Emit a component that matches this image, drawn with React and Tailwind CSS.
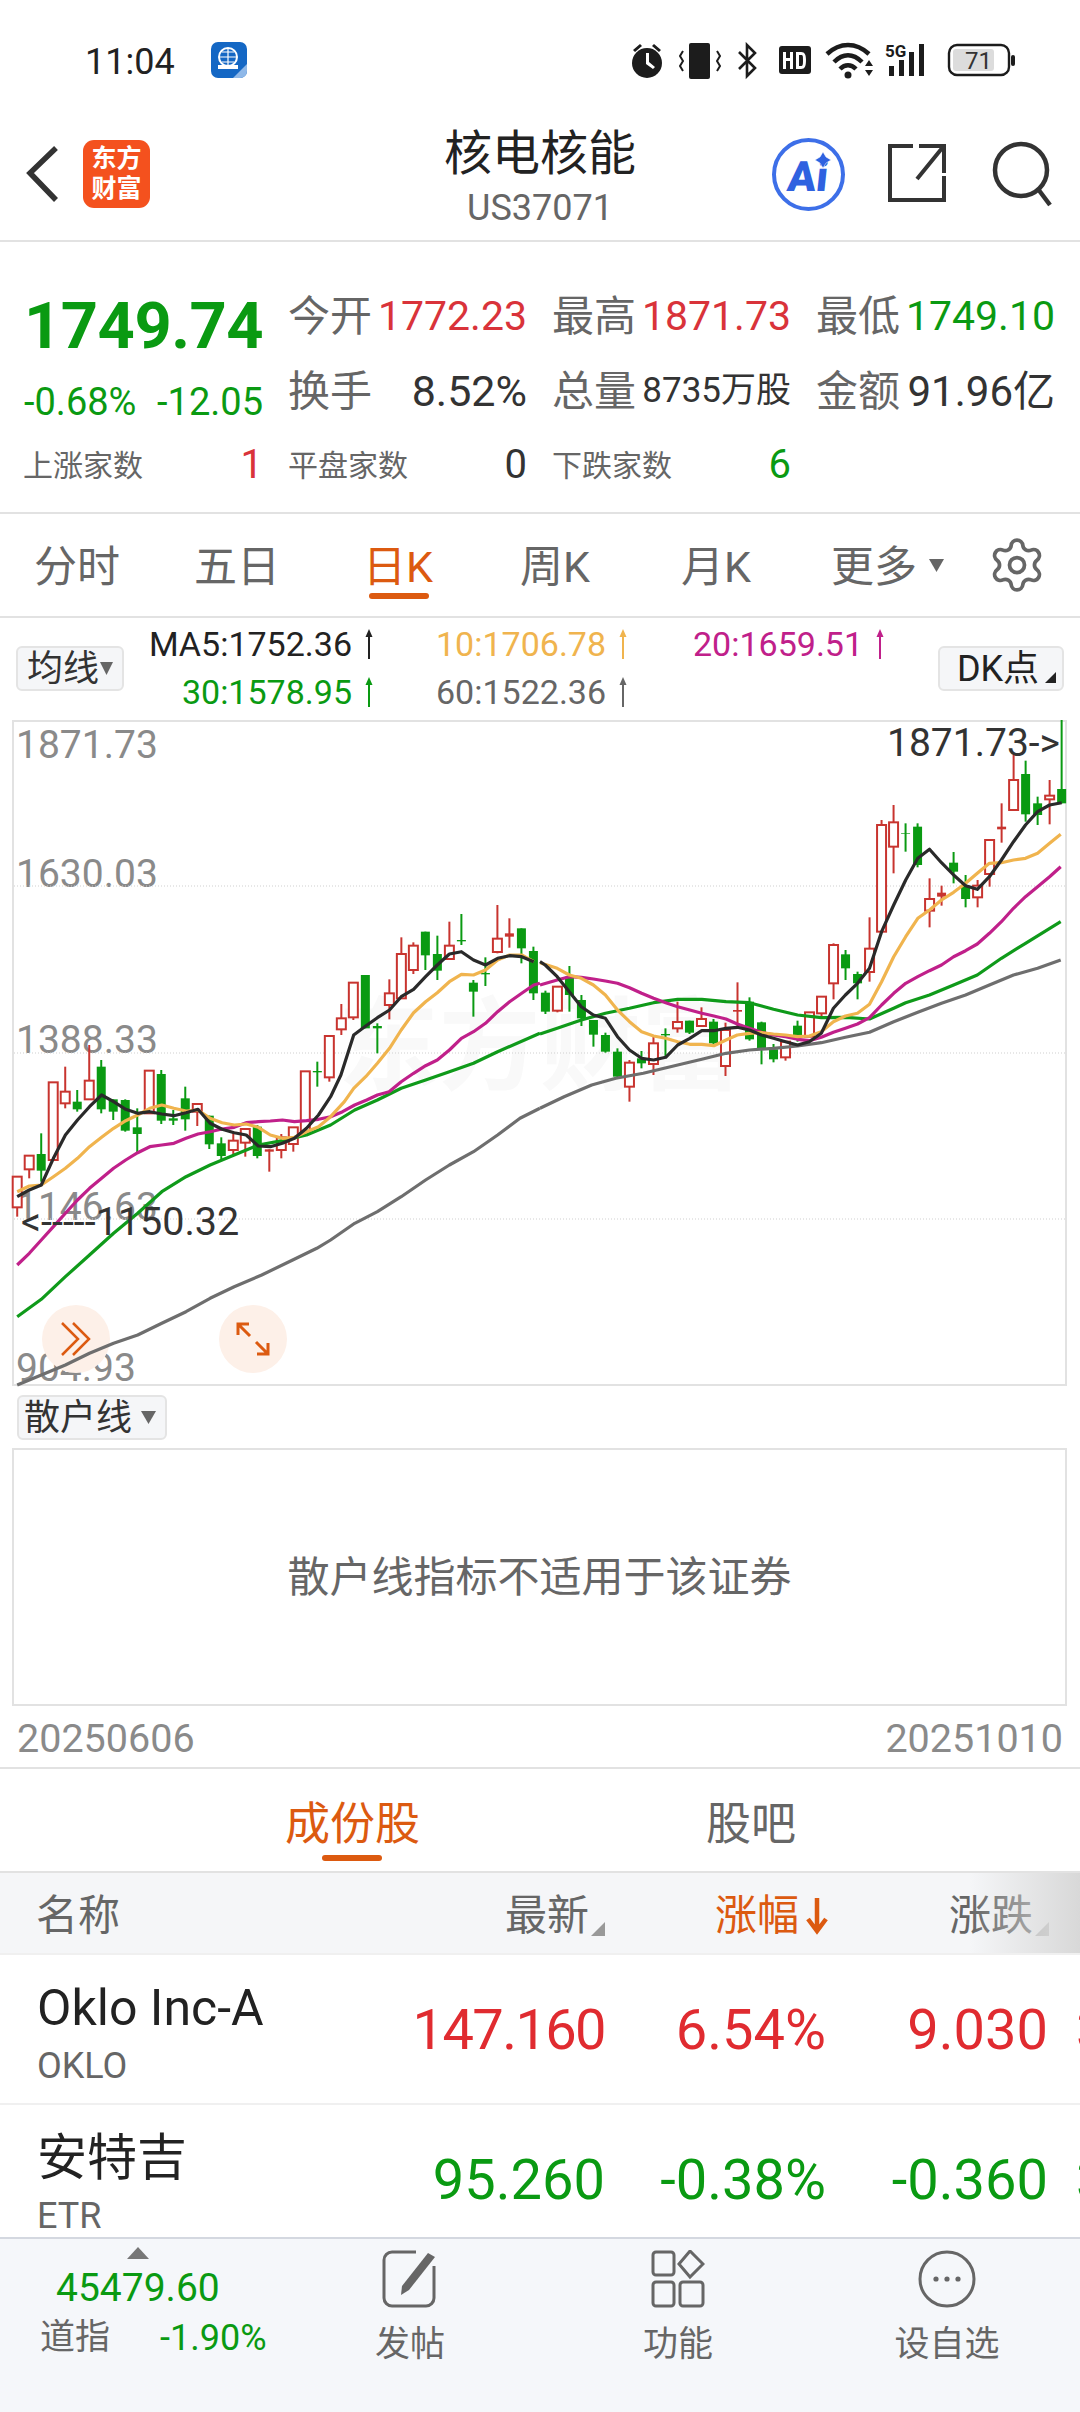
import { Settings } from "lucide-react"

const FONT = "font-['Roboto','Noto_Sans_CJK_SC',sans-serif]"

// 读取自截图的K线: [类型, 实体上, 实体下, 影线上, 影线下]
const CANDLES_A = [
    ['r',380,472,380,500],['r',317,358,317,385],['g',312,362,250,395],['r',97,330,97,330],['r',125,160,50,175],
    ['g',155,178,120,185],['r',92,148,-15,148],['g',50,178,30,190],['g',148,185,148,210],['g',150,242,148,245],
    ['g',232,252,175,310],['r',62,190,62,190],['g',72,212,60,222],['g',205,212,180,225],['g',145,208,110,242],
    ['r',162,185,162,228],['g',197,283,197,297],['g',280,318,262,332],['r',272,300,250,318],['r',237,278,237,320],
    ['g',230,318,225,325],['s',298,305,298,365],['r',262,300,252,325],['r',232,282,232,305],['r',64,245,64,250],
    ['g',63,67,35,110],['r',-42,82,-42,95],
]
const CANDLES_B = [
    ['r',895,928,852,945],['r',788,892,788,900],['g',765,925,765,925],['g',918,925,910,1000],['r',820,855,778,898],
    ['r',702,835,652,835],['r',677,750,667,762],['g',635,706,635,750],['g',702,752,647,780],['r',677,717,605,717],
    ['g',660,664,582,675],['g',788,815,780,890],['g',759,763,712,798],['r',656,696,555,700],['s',640,650,595,683],
    ['g',625,685,625,730],['g',693,820,680,840],
    ['g',818,875,812,882],['r',800,872,800,877],['g',770,825,738,875],['g',840,895,825,918],['g',900,944,900,980],
    ['g',945,995,938,998],['g',995,1070,985,1075],['r',1028,1100,1020,1145],['g',1015,1030,993,1045],['r',970,1032,945,1065],
    ['g',942,946,925,1010],['r',906,925,845,938],['g',902,938,902,942],['r',897,918,862,920],['g',905,970,897,975],
    ['r',930,1038,908,1068],['s',870,875,787,925],['g',845,958,832,962],['g',907,990,905,1033],['g',988,1018,972,1027],
    ['r',965,1012,965,1022],['g',917,945,902,965],['r',877,950,877,950],['r',830,880,830,890],['r',675,790,670,838],
    ['g',703,745,690,780],['g',762,790,755,838],['r',686,756,592,785],['r',315,635,300,635],['r',307,380,255,460],
    ['g',340,342,310,395],['g',320,435,310,442],['r',537,572,475,622],['s',518,530,497,557],['g',428,455,396,490],
    ['g',497,537,465,562],['r',497,532,480,562],['r',360,462,360,500],['s',320,328,250,368],['r',180,270,105,270],
    ['g',162,283,122,305],['g',250,285,230,315],['r',227,238,180,313],['g',207,250,0,250],
]
const CANDLES = [
    ...CANDLES_A.map(c => [c[0], 1050 + c[1] / 3, 1050 + c[2] / 3, 1050 + c[3] / 3, 1050 + c[4] / 3]),
    ...CANDLES_B.map(c => [c[0], 720 + c[1] / 3, 720 + c[2] / 3, 720 + c[3] / 3, 720 + c[4] / 3]),
]

const seg = (pts, ox, oy) => pts.map(([x, y]) => `${(ox + x / 2.904).toFixed(1)},${(oy + y / 3).toFixed(1)}`).join(' ')

const MA_LINES = [
    { color: '#6e6e6e', points: [
        seg([[50,1005],[120,975],[190,945],[260,910],[330,880],[400,855],[470,820],[540,785],[610,745],[680,710],[760,675],[850,630],[920,595],[960,570],[1030,520],[1096,485],[1165,440],[1236,390],[1305,345],[1375,305],[1445,255],[1510,205],[1568,175]], 0, 1050),
        seg([[0,1165],[70,1130],[150,1095],[220,1075],[300,1060],[400,1035],[470,1018],[540,1000],[608,990],[678,985],[748,978],[817,968],[887,952],[957,937],[1027,905],[1097,877],[1166,850],[1236,825],[1305,795],[1375,765],[1445,745],[1512,720]], 540, 720),
    ] },
    { color: '#0f9a1a', points: [
        seg([[50,800],[120,748],[190,680],[260,615],[330,550],[400,490],[470,425],[540,380],[610,345],[680,315],[750,285],[820,272],[890,255],[960,225],[1030,180],[1096,150],[1165,115],[1236,90],[1305,65],[1375,40],[1445,5],[1568,-50]], 0, 1050),
        seg([[0,942],[50,925],[120,900],[190,880],[260,865],[330,848],[400,838],[470,838],[540,845],[608,848],[678,868],[748,885],[817,893],[887,892],[957,897],[1027,865],[1062,848],[1131,825],[1201,795],[1270,765],[1340,715],[1410,670],[1512,605]], 540, 720),
    ] },
    { color: '#c0208a', points: [
        seg([[50,645],[85,610],[120,570],[155,530],[190,490],[225,450],[260,415],[295,385],[330,355],[365,330],[400,308],[435,290],[470,285],[505,280],[540,265],[575,252],[610,245],[645,237],[680,232],[715,218],[750,215],[785,213],[820,210],[855,215],[890,212],[925,208],[960,200],[995,185],[1030,165],[1065,150],[1096,135],[1130,125],[1165,95],[1201,70],[1236,47],[1270,30],[1305,0],[1340,-35],[1375,-55],[1410,-80],[1445,-115],[1480,-145],[1515,-170],[1550,-195],[1568,-200]], 0, 1050),
        seg([[0,795],[50,780],[85,770],[120,772],[155,777],[190,783],[225,790],[260,803],[295,820],[330,835],[365,848],[400,860],[435,870],[470,880],[505,888],[540,897],[573,912],[608,925],[643,937],[678,945],[713,950],[748,958],[782,962],[817,952],[852,937],[887,925],[922,912],[957,893],[992,855],[1027,820],[1062,790],[1097,770],[1131,752],[1166,735],[1201,710],[1236,692],[1270,672],[1305,640],[1340,605],[1375,565],[1410,530],[1445,500],[1480,470],[1512,440]], 540, 720),
    ] },
    { color: '#f0b44e', points: [
        seg([[50,425],[85,408],[120,405],[155,380],[190,355],[225,325],[260,290],[295,262],[330,235],[365,212],[400,195],[435,175],[470,165],[505,175],[540,183],[575,180],[610,205],[645,218],[680,225],[715,222],[750,232],[785,255],[820,265],[855,262],[890,245],[925,230],[960,200],[1000,155],[1027,115],[1062,80],[1096,40],[1131,-5],[1165,-60],[1201,-112],[1236,-145],[1270,-172],[1305,-205],[1340,-227],[1375,-225],[1410,-240],[1445,-270],[1480,-285],[1515,-285],[1550,-265]], 0, 1050),
        seg([[0,728],[50,745],[85,765],[120,775],[155,795],[190,825],[225,870],[260,905],[295,935],[330,948],[365,955],[400,965],[435,973],[470,973],[505,977],[540,960],[573,945],[608,940],[643,938],[678,942],[713,945],[748,950],[782,948],[817,935],[852,905],[887,888],[922,880],[957,853],[992,785],[1027,710],[1062,650],[1097,595],[1131,570],[1166,540],[1201,517],[1236,490],[1270,460],[1305,430],[1340,428],[1375,420],[1410,415],[1445,400],[1480,370],[1512,343]], 540, 720),
    ] },
    { color: '#2a2a2a', points: [
        seg([[50,440],[85,420],[120,405],[155,325],[190,255],[225,210],[260,170],[295,135],[330,155],[365,178],[400,190],[435,185],[470,192],[505,197],[540,188],[575,178],[610,220],[645,238],[680,248],[715,255],[750,288],[785,290],[820,280],[855,265],[890,235],[925,195],[960,140],[990,75],[1027,-45],[1062,-72],[1096,-97],[1131,-120],[1165,-160],[1201,-182],[1236,-220],[1270,-255],[1305,-288],[1340,-295],[1375,-270],[1410,-255],[1445,-275],[1480,-283],[1515,-280],[1550,-265]], 0, 1050),
        seg([[0,725],[15,735],[50,770],[85,815],[120,860],[155,885],[190,895],[225,950],[260,990],[295,1015],[330,1020],[365,1012],[400,975],[435,955],[470,932],[505,932],[540,925],[573,922],[608,930],[643,945],[678,955],[713,965],[748,975],[782,965],[817,940],[852,865],[887,825],[922,790],[957,745],[992,635],[1027,555],[1062,480],[1097,415],[1131,388],[1166,428],[1201,465],[1236,497],[1270,508],[1305,470],[1340,420],[1375,365],[1410,315],[1445,275],[1480,255],[1515,248]], 540, 720),
    ] },
]

const Candle = ({ data, index }) => {
    const [type, top, bot, wTop, wBot] = data
    const x = 17.2 + 12.005 * index
    const color = type === 'g' ? '#0a9a12' : '#c8342f'
    return (
        <g>
            <line x1={x} x2={x} y1={wTop} y2={wBot} stroke={color} strokeWidth="2" />
            {type === 'r' ? (
                <rect x={x - 4.5} y={top} width="9" height={bot - top} fill="#fff" stroke={color} strokeWidth="2" />
            ) : (
                <rect x={x - 4.5} y={top} width="9" height={bot - top} fill={color} />
            )}
        </g>
    )
}

const UpArrow = ({ color }) => (
    <svg width="10" height="30" viewBox="0 0 10 30" className="ml-[12px] shrink-0">
        <path d="M5 30V4" stroke={color} strokeWidth="2" />
        <path d="M5 0L8.5 8H1.5Z" fill={color} />
    </svg>
)

const MaItem = ({ text, color, className = '' }) => (
    <div className={`flex items-center h-[48px] text-[34px] ${className}`} style={{ color }}>
        <span>{text}</span>
        <UpArrow color={color} />
    </div>
)

const Corner = ({ color = '#999' }) => (
    <svg width="14" height="14" viewBox="0 0 14 14" className="shrink-0">
        <path d="M14 0V14H0Z" fill={color} />
    </svg>
)

const Stat = ({ label, value, color, valueClass = 'text-[41px]' }) => (
    <div className="flex items-center justify-between h-[75px]">
        <span className="-ml-[2px] text-[42px] text-[#666]">{label}</span>
        <span className={valueClass} style={{ color }}>{value}</span>
    </div>
)

const Count = ({ label, value, color }) => (
    <div className="flex items-center justify-between h-[72px]">
        <span className="-ml-[2px] text-[30px] text-[#666]">{label}</span>
        <span className="text-[40px]" style={{ color }}>{value}</span>
    </div>
)

const AxisLabel = ({ className, children }) => (
    <div className={`absolute left-[2px] text-[39px] leading-[44px] text-[#8a8a8a] ${className}`}>{children}</div>
)

const StockRow = ({ name, code, price, pct, change, color, next, priceClass = '' }) => (
    <div className="flex h-[150px] pl-[37px] border-b-2 border-[#f0f0f0] whitespace-nowrap">
        <div className="w-[300px] pt-[24px] shrink-0">
            <div className="text-[50px] leading-[58px] text-[#222]">{name}</div>
            <div className="text-[36px] leading-[44px] mt-[7px] text-[#666]">{code}</div>
        </div>
        <div className="flex items-center text-[56px] pt-[2px]" style={{ color }}>
            <div className={`w-[268px] text-right shrink-0 ${priceClass}`}>{price}</div>
            <div className="w-[221px] text-right shrink-0">{pct}</div>
            <div className="w-[222px] text-right shrink-0">{change}</div>
            <div className="ml-[28px] shrink-0">{next}</div>
        </div>
    </div>
)

const BottomAction = ({ label, center, children }) => (
    <div className={`absolute top-[11px] w-[140px] flex flex-col items-center ${center}`}>
        <div className="h-[58px] flex items-center">{children}</div>
        <div className="text-[35px] leading-[44px] mt-[15px] text-[#666]">{label}</div>
    </div>
)

export default function App() {
    return (
        <div className={`${FONT} relative w-[1080px] h-[2412px] overflow-hidden bg-white flex flex-col`}>

            {/* Status bar */}
            <div className="h-[124px] shrink-0 flex items-start pt-[42px] pl-[85px]">
                <span className="text-[36px] leading-[40px] text-[#222]">11:04</span>
                <svg width="36" height="36" viewBox="0 0 36 36" className="ml-[36px]">
                    <rect width="36" height="36" rx="7" fill="#1467c4" />
                    <circle cx="17" cy="15" r="9" fill="none" stroke="#fff" strokeWidth="2" />
                    <path d="M8 15H26M17 6V24M11 10H23M11 20H23" stroke="#fff" strokeWidth="1.2" />
                    <rect x="7" y="23" width="20" height="4" fill="#fff" />
                    <path d="M36 22V29A7 7 0 0 1 29 36H22Z" fill="#8fb8e8" />
                </svg>
                <svg width="392" height="38" viewBox="0 0 392 38" className="ml-[384px]">
                    <g fill="#1c1c1c">
                        <circle cx="16" cy="21" r="15" />
                        <path d="M2 8L9 2L11 4L4 10ZM30 8L23 2L21 4L28 10Z" />
                        <path d="M15 11H18V20L24 25L22 27L15 22Z" fill="#fff" />
                        <rect x="58" y="1" width="21" height="36" rx="2" />
                        <path d="M52 9L49 14L52 19L49 24L52 29M86 9L89 14L86 19L89 24L86 29" fill="none" stroke="#1c1c1c" strokeWidth="2" />
                        <path d="M108 10L124 26L116 34V3L124 11L108 27" fill="none" stroke="#1c1c1c" strokeWidth="2.6" />
                        <rect x="148" y="4" width="32" height="28" rx="3" />
                        <path d="M152 10H155V16H159V10H162V27H159V19H155V27H152ZM165 10H170C174 10 175 13 175 18C175 24 174 27 170 27H165ZM168 13V24H170C172 24 172 22 172 18C172 14 172 13 170 13Z" fill="#fff" />
                        <path d="M196 12C209 0 225 0 238 12" fill="none" stroke="#1c1c1c" strokeWidth="4.5" />
                        <path d="M203 20C212 11 222 11 231 20" fill="none" stroke="#1c1c1c" strokeWidth="4.5" />
                        <path d="M209 27C214 22 220 22 225 27" fill="none" stroke="#1c1c1c" strokeWidth="4.5" />
                        <circle cx="217" cy="33" r="3.5" />
                        <path d="M234 24L238 18L242 24ZM234 28L238 34L242 28Z" />
                        <rect x="258" y="24" width="5" height="10" />
                        <rect x="268" y="18" width="5" height="16" />
                        <rect x="278" y="10" width="5" height="24" />
                        <rect x="288" y="2" width="5" height="32" />
                    </g>
                    <text x="254" y="15" fontSize="17" fontWeight="700" fill="#1c1c1c">5G</text>
                    <rect x="318" y="3" width="60" height="30" rx="8" fill="none" stroke="#1c1c1c" strokeWidth="2.4" />
                    <rect x="322" y="7" width="41" height="22" rx="3" fill="#dcdcdc" />
                    <rect x="380" y="13" width="4" height="11" rx="2" fill="#1c1c1c" />
                    <text x="334" y="27" fontSize="24" fill="#333">71</text>
                </svg>
            </div>

            {/* Header */}
            <div className="relative h-[118px] shrink-0 border-b-2 border-[#e2e2e2] flex items-start">
                <svg width="40" height="60" viewBox="0 0 40 60" className="ml-[24px] mt-[21px]">
                    <path d="M32 3L6 28L32 55" fill="none" stroke="#333" strokeWidth="5.5" />
                </svg>
                <div className="ml-[19px] mt-[16px] w-[67px] h-[68px] rounded-[11px] bg-[#f4511e] flex items-center justify-center text-center text-[25px] leading-[30px] font-bold text-white">
                    东方<br />财富
                </div>
                <div className="absolute left-0 right-0 top-[2px] flex flex-col items-center">
                    <div className="text-[48px] leading-[56px] text-[#222]">核电核能</div>
                    <div className="text-[36px] leading-[40px] mt-[6px] text-[#666]">US37071</div>
                </div>
                <div className="relative ml-[622px] mt-[14px] w-[73px] h-[73px] rounded-full border-[4px] border-[#3d6fe8] flex items-center justify-center text-[42px] font-black text-[#2f62e0]">
                    <span className="-skew-x-6 pt-[3px]">Ai</span>
                    <svg width="16" height="16" viewBox="0 0 16 16" className="absolute left-[39px] top-[10px]">
                        <path d="M8 0L11 5L16 8L11 11L8 16L5 11L0 8L5 5Z" fill="#2f62e0" stroke="#fff" strokeWidth="0.5" />
                    </svg>
                </div>
                <svg width="60" height="60" viewBox="0 0 60 60" className="ml-[42px] mt-[19px]">
                    <path d="M26 3H3V57H57V33M30 36L56 4M32 3H57V30" fill="none" stroke="#333" strokeWidth="4" />
                </svg>
                <svg width="62" height="66" viewBox="0 0 62 66" className="ml-[45px] mt-[17px]">
                    <circle cx="29" cy="29" r="26" fill="none" stroke="#333" strokeWidth="4.5" />
                    <path d="M46 48L58 64" stroke="#333" strokeWidth="4.5" />
                </svg>
            </div>

            {/* Quote */}
            <div className="h-[272px] shrink-0 border-b-2 border-[#e2e2e2] pt-[37px] pl-[25px] grid grid-cols-[238px_237px_237px_237px] gap-x-[27px] content-start">
                <div className="h-[75px] pt-[19px] -ml-[1px] flex items-center text-[65px] leading-none font-bold text-[#0a9a12] tracking-[-0.5px]">1749.74</div>
                <Stat label="今开" value="1772.23" color="#d9333a" />
                <Stat label="最高" value="1871.73" color="#d9333a" />
                <Stat label="最低" value="1749.10" color="#0a9a12" />

                <div className="h-[75px] pt-[21px] -ml-[1px] flex items-center justify-between text-[38px] text-[#0a9a12]">
                    <span>-0.68%</span>
                    <span>-12.05</span>
                </div>
                <Stat label="换手" value="8.52%" color="#333" valueClass="text-[43px]" />
                <Stat label="总量" value="8735万股" color="#333" valueClass="text-[35px]" />
                <Stat label="金额" value="91.96亿" color="#333" valueClass="text-[42px]" />

                <Count label="上涨家数" value="1" color="#d9333a" />
                <Count label="平盘家数" value="0" color="#333" />
                <Count label="下跌家数" value="6" color="#0a9a12" />
            </div>

            {/* Period tabs */}
            <div className="h-[104px] shrink-0 border-b-2 border-[#e2e2e2] flex items-center pt-[4px] text-[43px] text-[#666] whitespace-nowrap">
                <span className="ml-[34px] w-[160px]">分时</span>
                <span className="w-[169px]">五日</span>
                <span className="relative w-[157px] text-[#dc5a10]">
                    日K
                    <span className="absolute left-[6px] top-[58px] w-[60px] h-[6px] rounded-full bg-[#dc5a10]"></span>
                </span>
                <span className="w-[161px]">周K</span>
                <span className="w-[150px]">月K</span>
                <span>更多</span>
                <svg width="15" height="13" viewBox="0 0 15 13" className="ml-[12px] mb-[4px]">
                    <path d="M0 0H15L7.5 13Z" fill="#666" />
                </svg>
                <Settings size={60} strokeWidth={1.5} color="#666" className="ml-[43px] -mt-[4px]" />
            </div>

            {/* MA legend */}
            <div className="h-[102px] shrink-0 flex items-start whitespace-nowrap">
                <div className="ml-[16px] mt-[28px] w-[108px] h-[45px] rounded-[6px] bg-[#f5f6f8] border-2 border-[#e4e4e4] flex items-center justify-center text-[36px] text-[#333]">
                    均线
                    <svg width="13" height="13" viewBox="0 0 13 13" className="ml-[1px]">
                        <path d="M0 0H13L6.5 13Z" fill="#666" />
                    </svg>
                </div>
                <div className="mt-[2px] grid grid-cols-[250px_257px_200px]">
                    <MaItem text="MA5:1752.36" color="#222" className="justify-end" />
                    <MaItem text="10:1706.78" color="#f0b44e" className="ml-[62px]" />
                    <MaItem text="20:1659.51" color="#c0208a" className="ml-[62px]" />
                    <MaItem text="30:1578.95" color="#0a9a12" className="justify-end" />
                    <MaItem text="60:1522.36" color="#666" className="ml-[62px]" />
                </div>
                <div className="ml-[107px] mt-[28px] w-[126px] h-[45px] rounded-[6px] bg-[#f5f6f8] border-2 border-[#e4e4e4] flex items-center justify-center text-[36px] text-[#222] relative pr-[6px]">
                    DK点
                    <svg width="11" height="11" viewBox="0 0 11 11" className="absolute right-[6px] bottom-[6px]">
                        <path d="M11 0V11H0Z" fill="#222" />
                    </svg>
                </div>
            </div>

            {/* K chart */}
            <div className="relative ml-[12px] w-[1055px] h-[666px] shrink-0 box-border border-2 border-[#e2e2e2]">
                <div className="absolute left-[324px] top-[275px] text-[101px] leading-none font-bold text-[#f9f9f9] whitespace-nowrap">东方财富</div>
                <AxisLabel className="top-[1px]">1871.73</AxisLabel>
                <AxisLabel className="top-[130px]">1630.03</AxisLabel>
                <AxisLabel className="top-[296px]">1388.33</AxisLabel>
                <AxisLabel className="top-[463px]">1146.63</AxisLabel>
                <AxisLabel className="top-[624px]">904.93</AxisLabel>
                <div className="absolute left-[28px] top-[583px] w-[68px] h-[68px] rounded-full bg-[#fdf0e8] flex items-center justify-center">
                    <svg width="30" height="34" viewBox="0 0 30 34" fill="none" stroke="#dc5a10" strokeWidth="2.5">
                        <path d="M1 1L17 17L1 33M12 1L28 17L12 33" />
                    </svg>
                </div>
                <div className="absolute left-[205px] top-[583px] w-[68px] h-[68px] rounded-full bg-[#fdf0e8] flex items-center justify-center">
                    <svg width="34" height="34" viewBox="0 0 34 34" fill="none" stroke="#dc5a10" strokeWidth="3">
                        <path d="M2 13V2H13M2 2L14 14M20 20L32 32M21 32H32V21" />
                    </svg>
                </div>
                <svg width="1051" height="662" viewBox="14 722 1051 662" className="absolute inset-0 overflow-visible">
                    {[886, 1053, 1219].map(y => (
                        <line key={y} x1="14" x2="1065" y1={y} y2={y} stroke="#cfcfcf" strokeWidth="1" strokeDasharray="1 2" />
                    ))}
                    {CANDLES.map((c, i) => <Candle key={i} data={c} index={i} />)}
                    {MA_LINES.map(line => (
                        <g key={line.color}>
                            {line.points.map((p, i) => (
                                <polyline key={i} points={p} fill="none" stroke={line.color} strokeWidth="3.2" strokeLinejoin="round" />
                            ))}
                        </g>
                    ))}
                </svg>
                <div className="absolute left-[873px] top-[-1px] text-[39px] leading-[44px] text-[#333]">1871.73-&gt;</div>
                <div className="absolute left-[7px] top-[478px] text-[39.5px] leading-[44px] text-[#333] whitespace-nowrap">&lt;-----1150.32</div>
            </div>

            {/* Sub indicator */}
            <div className="h-[62px] shrink-0 pt-[9px] pl-[17px]">
                <div className="w-[150px] h-[45px] rounded-[6px] bg-[#f5f6f8] border-2 border-[#e4e4e4] flex items-center pl-[5px] text-[36px] text-[#333]">
                    散户线
                    <svg width="15" height="13" viewBox="0 0 15 13" className="ml-[9px]">
                        <path d="M0 0H15L7.5 13Z" fill="#666" />
                    </svg>
                </div>
            </div>
            <div className="ml-[12px] w-[1055px] h-[258px] shrink-0 border-2 border-[#e2e2e2] flex items-center justify-center text-[42px] text-[#666]">
                散户线指标不适用于该证券
            </div>
            <div className="h-[63px] shrink-0 border-b-2 border-[#e2e2e2] flex items-center justify-between pt-[5px] pl-[17px] pr-[17px] text-[39.5px] text-[#8a8a8a]">
                <span>20250606</span>
                <span>20251010</span>
            </div>

            {/* List tabs */}
            <div className="relative h-[104px] shrink-0 border-b-2 border-[#e2e2e2] flex items-center pt-[10px] text-[45px] text-[#666]">
                <span className="ml-[285px] text-[#dc5a10]">成份股</span>
                <span className="ml-[286px]">股吧</span>
                <span className="absolute left-[322px] top-[86px] w-[60px] h-[6px] rounded-full bg-[#dc5a10]"></span>
            </div>

            {/* List header */}
            <div className="relative h-[82px] shrink-0 bg-[#f5f6f8] border-b-2 border-[#f0f0f0] flex items-center pt-[4px] text-[42px] text-[#666]">
                <span className="ml-[36px]">名称</span>
                <span className="ml-[385px]">最新</span>
                <span className="ml-[2px] mt-[28px]"><Corner /></span>
                <span className="ml-[110px] text-[#dc5a10]">涨幅</span>
                <svg width="24" height="40" viewBox="0 0 24 40" className="ml-[6px]">
                    <path d="M12 3V34M3 24L12 36L21 24" fill="none" stroke="#dc5a10" strokeWidth="4.5" />
                </svg>
                <span className="ml-[120px]">涨跌</span>
                <span className="ml-[2px] mt-[28px]"><Corner color="#b5b5b5" /></span>
                <div className="absolute right-0 top-0 bottom-0 w-[110px] bg-linear-to-r from-transparent to-[#d8d8d8]"></div>
            </div>

            {/* List */}
            <div className="h-[282px] shrink-0 overflow-hidden">
                <StockRow name="Oklo Inc-A" code="OKLO" price="147.160" pct="6.54%" change="9.030" color="#e02b30" next="3" priceClass="tracking-[-1.6px]" />
                <StockRow name="安特吉" code="ETR" price="95.260" pct="-0.38%" change="-0.360" color="#0a9a12" next="3" />
            </div>

            {/* Bottom bar */}
            <div className="relative flex-1 bg-[#f5f7fa] border-t-2 border-[#d4d8e0]">
                <svg width="22" height="12" viewBox="0 0 22 12" className="absolute left-[127px] top-[8px]">
                    <path d="M11 0L22 12H0Z" fill="#777" />
                </svg>
                <div className="absolute left-[56px] top-[27px] text-[39px] leading-[44px] text-[#0a9a12]">45479.60</div>
                <div className="absolute left-[40px] top-[77px] flex items-center w-[260px] leading-[44px]">
                    <span className="text-[35px] text-[#666]">道指</span>
                    <span className="ml-[50px] text-[36px] text-[#0a9a12]">-1.90%</span>
                </div>
                <BottomAction label="发帖" center="left-[340px]">
                    <svg width="56" height="58" viewBox="0 0 56 58" fill="none" stroke="#666" strokeWidth="3">
                        <path d="M34 2H10A8 8 0 0 0 2 10V48A8 8 0 0 0 10 56H44A8 8 0 0 0 52 48V16" />
                        <path d="M20 36L46 3L53 7L27 40L19 45Z" fill="#666" stroke="none" />
                    </svg>
                </BottomAction>
                <BottomAction label="功能" center="left-[608px]">
                    <svg width="54" height="58" viewBox="0 0 54 58" fill="none" stroke="#666" strokeWidth="3">
                        <rect x="2" y="2" width="21" height="23" rx="3" />
                        <path d="M39 1L52 14L39 27L28 14Z" />
                        <rect x="2" y="32" width="21" height="24" rx="3" />
                        <rect x="29" y="32" width="23" height="24" rx="3" />
                    </svg>
                </BottomAction>
                <BottomAction label="设自选" center="left-[877px]">
                    <svg width="58" height="58" viewBox="0 0 58 58" fill="none">
                        <circle cx="29" cy="29" r="27" stroke="#666" strokeWidth="3" />
                        <circle cx="18" cy="29" r="2.6" fill="#666" />
                        <circle cx="29" cy="29" r="2.6" fill="#666" />
                        <circle cx="40" cy="29" r="2.6" fill="#666" />
                    </svg>
                </BottomAction>
            </div>
        </div>
    )
}
